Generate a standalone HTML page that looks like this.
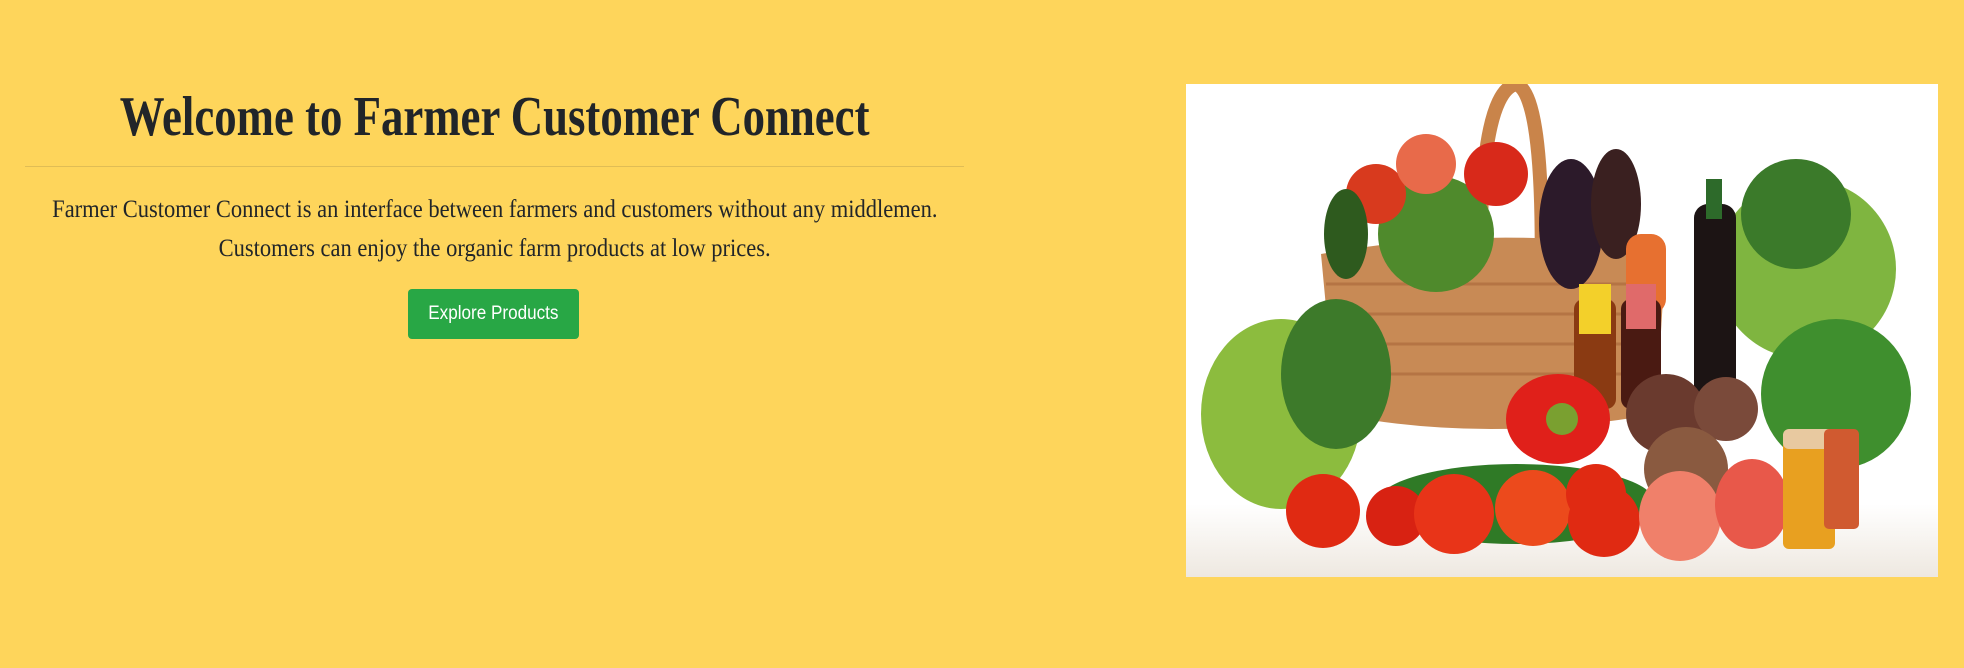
<!DOCTYPE html>
<html><head><meta charset="utf-8"><style>
html,body{margin:0;padding:0;}
body{width:1964px;height:668px;background:#fed55b;position:relative;overflow:hidden;font-family:"Liberation Serif",serif;color:#212529;}
h1{position:absolute;left:0;top:84px;width:989px;margin:0;text-align:center;font-size:56px;line-height:66px;font-weight:bold;}
h1 span{display:inline-block;transform:scaleX(0.80);}
.hr{position:absolute;left:25px;top:166px;width:939px;height:1px;background:#e0bd55;}
p{position:absolute;left:0;width:989px;margin:0;text-align:center;font-size:25px;}
p span{display:inline-block;transform:scaleX(0.90);white-space:nowrap;}
.btn{position:absolute;left:408px;top:289px;width:171px;height:50px;background:#28a745;border-radius:4px;color:#fff;font-family:"Liberation Sans",sans-serif;font-size:19px;line-height:50px;text-align:center;}
.btn span{display:inline-block;transform:scaleX(0.9);}
.img{position:absolute;left:1186px;top:84px;width:752px;height:493px;background:#fff;}
</style></head><body>
<h1><span>Welcome to Farmer Customer Connect</span></h1>
<div class="hr"></div>
<p style="top:196px"><span>Farmer Customer Connect is an interface between farmers and customers without any middlemen.</span></p>
<p style="top:235px"><span>Customers can enjoy the organic farm products at low prices.</span></p>
<div class="btn"><span>Explore Products</span></div>
<div class="img">
<svg width="752" height="493" viewBox="0 0 752 493">
<defs><linearGradient id="fl" x1="0" y1="0" x2="0" y2="1"><stop offset="0" stop-color="#fff"/><stop offset="1" stop-color="#eee8e0"/></linearGradient></defs>
<rect width="752" height="493" fill="#fff"/>
<rect y="420" width="752" height="73" fill="url(#fl)"/>
<path d="M295 220 Q290 10 330 0 Q360 10 355 220" fill="none" stroke="#c9844a" stroke-width="14"/>
<path d="M135 170 Q300 140 480 165 L470 330 Q300 360 150 330 Z" fill="#c88a55"/>
<g stroke="#a9663a" stroke-width="3" opacity=".6">
<line x1="140" y1="200" x2="475" y2="200"/><line x1="142" y1="230" x2="473" y2="230"/><line x1="145" y1="260" x2="472" y2="260"/><line x1="148" y1="290" x2="470" y2="290"/></g>
<circle cx="250" cy="150" r="58" fill="#4f8a2c"/>
<circle cx="190" cy="110" r="30" fill="#d83a1e"/>
<circle cx="240" cy="80" r="30" fill="#e86a4a"/>
<circle cx="310" cy="90" r="32" fill="#d8291a"/>
<ellipse cx="385" cy="140" rx="32" ry="65" fill="#2c1a2a"/>
<ellipse cx="430" cy="120" rx="25" ry="55" fill="#3a2020"/>
<ellipse cx="160" cy="150" rx="22" ry="45" fill="#2e5a1e"/>
<rect x="440" y="150" width="40" height="80" fill="#e77030" rx="15"/>
<circle cx="620" cy="185" r="90" fill="#7fb540"/>
<circle cx="610" cy="130" r="55" fill="#3b7a2a"/>
<rect x="508" y="120" width="42" height="200" rx="14" fill="#1c1414"/>
<rect x="520" y="95" width="16" height="40" fill="#2d6a2a"/>
<rect x="388" y="215" width="42" height="110" rx="10" fill="#8a3a12"/>
<rect x="393" y="200" width="32" height="50" fill="#f3d02a"/>
<rect x="435" y="215" width="40" height="110" rx="10" fill="#4a1a12"/>
<rect x="440" y="200" width="30" height="45" fill="#e06a6a"/>
<circle cx="650" cy="310" r="75" fill="#3f8f2e"/>
<ellipse cx="95" cy="330" rx="80" ry="95" fill="#8cbc3e"/>
<ellipse cx="150" cy="290" rx="55" ry="75" fill="#3d7a2a"/>
<circle cx="480" cy="330" r="40" fill="#6a3a2e"/>
<circle cx="540" cy="325" r="32" fill="#7a4a3a"/>
<circle cx="500" cy="385" r="42" fill="#8a5a40"/>
<ellipse cx="372" cy="335" rx="52" ry="45" fill="#e0201a"/>
<circle cx="376" cy="335" r="16" fill="#7aa030"/>
<ellipse cx="330" cy="420" rx="140" ry="40" fill="#2f7a26"/>
<circle cx="137" cy="427" r="37" fill="#e02a12"/>
<circle cx="210" cy="432" r="30" fill="#d82212"/>
<circle cx="268" cy="430" r="40" fill="#e83418"/>
<circle cx="347" cy="424" r="38" fill="#ec4a1c"/>
<circle cx="410" cy="410" r="30" fill="#e02a12"/>
<circle cx="418" cy="437" r="36" fill="#e02a12"/>
<ellipse cx="494" cy="432" rx="41" ry="45" fill="#f0806a"/>
<ellipse cx="566" cy="420" rx="37" ry="45" fill="#e8584a"/>
<rect x="597" y="355" width="52" height="110" rx="6" fill="#e8a020"/>
<rect x="597" y="345" width="52" height="20" rx="6" fill="#e8c9a0"/>
<rect x="638" y="345" width="35" height="100" rx="5" fill="#d05a30"/>
</svg>
</div>
</body></html>
